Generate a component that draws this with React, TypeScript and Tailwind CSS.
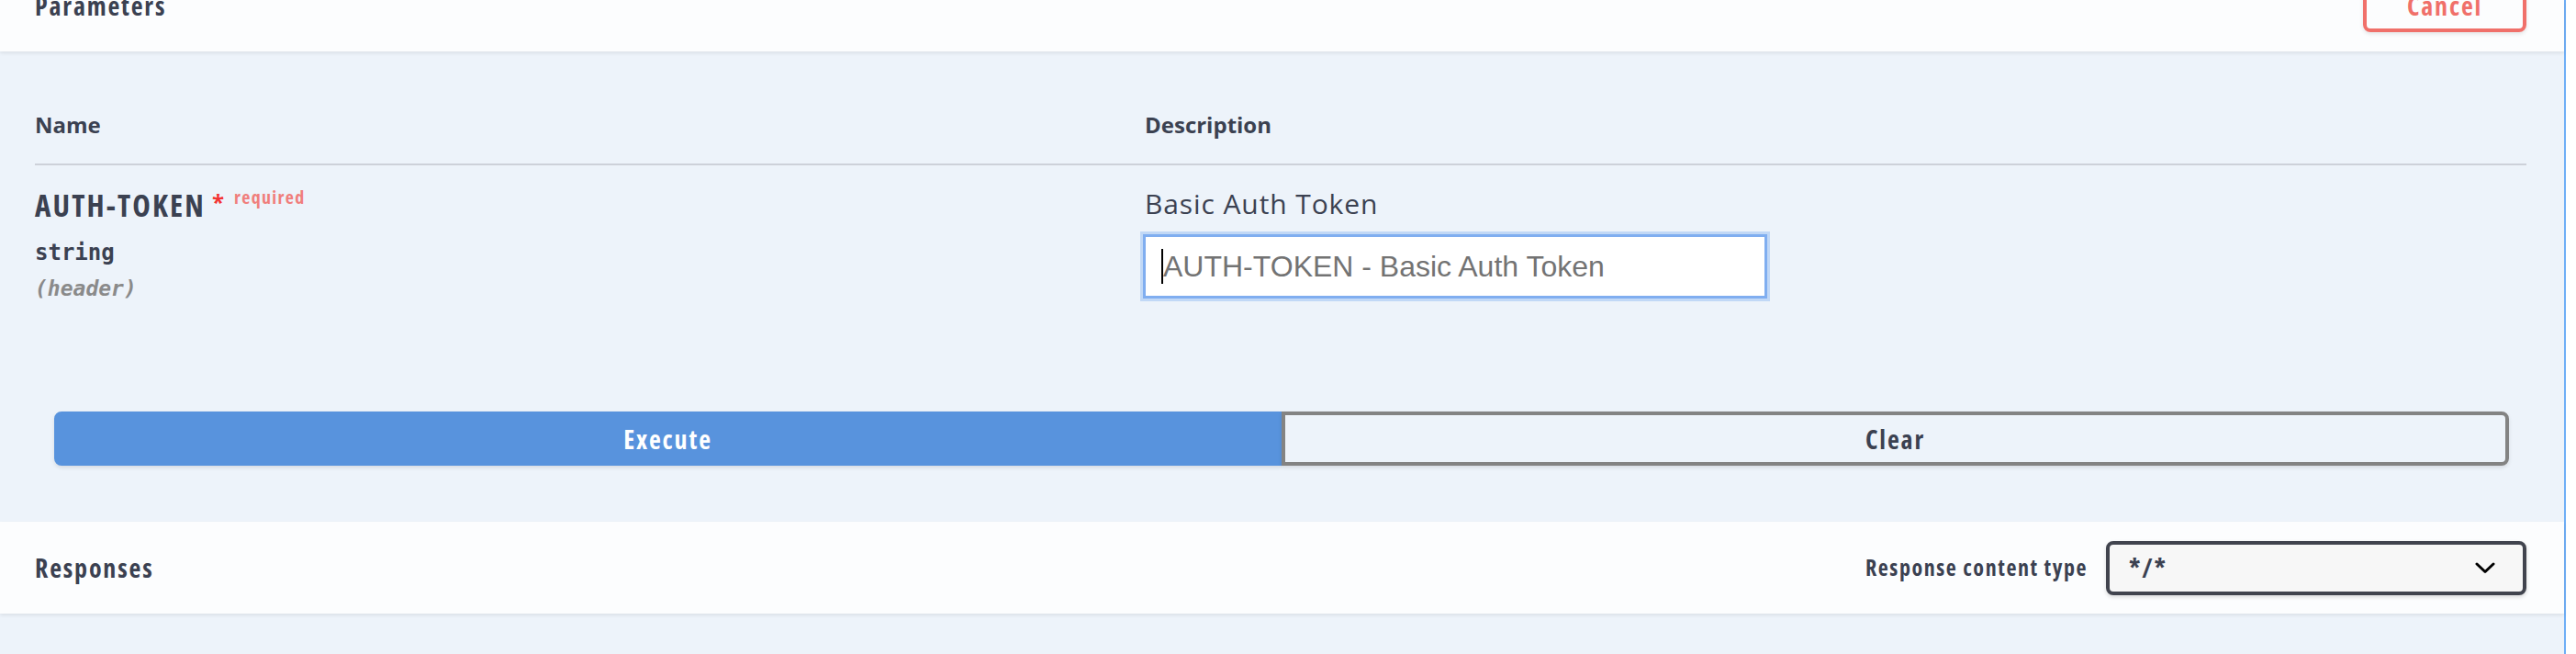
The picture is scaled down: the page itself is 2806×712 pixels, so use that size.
import React from "react";

const titl = "font-['Open_Sans',sans-serif] [font-stretch:75%] font-bold tracking-[0.065em]";
const open = "font-['Open_Sans',sans-serif]";

export default function App() {
  return (
    <div className="w-[2806px] h-[712px] bg-white flex overflow-hidden text-[#3b4151]">
      <div className="w-[2795px] h-full border-r-2 border-[#6eaef6] bg-[#edf3fa] flex flex-col">
        {/* Parameters header */}
        <div className="h-[56px] shrink-0 bg-[#fcfdfe] shadow-[0_2px_4px_rgba(0,0,0,0.08)] flex justify-between items-start pl-[38px] pr-[41px] relative z-10">
          <h4 className={`${titl} -mt-[8px] text-[28px] leading-[28px]`}>Parameters</h4>
          <button
            className={`${titl} -mt-[23px] h-[58px] w-[178px] border-4 border-[#f0706a] rounded-[8px] text-[#f0706a] text-[28px] leading-[28px] bg-transparent shadow-[0_2px_4px_rgba(0,0,0,0.1)]`}
          >
            Cancel
          </button>
        </div>

        {/* Parameters table */}
        <div className="pl-[38px] pr-[41px]">
          <div className="grid grid-cols-[1209px_1fr] pt-[68px] pb-[30px] border-b-2 border-[#cdd1d9]">
            <div className={`${open} font-bold text-[24px] leading-[24px]`}>Name</div>
            <div className={`${open} font-bold text-[24px] leading-[24px]`}>Description</div>
          </div>
          <div className="grid grid-cols-[1209px_1fr] pt-[28px]">
            <div className="flex flex-col">
              <div className="flex items-start h-[32px]">
                <span className={`${titl} text-[33px] leading-[32px] tracking-[0.07em]`}>AUTH-TOKEN</span>
                <span className={`${open} font-bold text-[24px] leading-[24px] text-[#f33333] ml-[7px]`}>*</span>
                <span className={`${titl} text-[20px] leading-[20px] text-[#f07e7c] ml-[11px] -mt-[3px]`}>required</span>
              </div>
              <div className="mt-[21px] font-['DejaVu_Sans_Mono',monospace] font-semibold text-[24px] leading-[28px]">string</div>
              <div className="mt-[11px] font-['DejaVu_Sans_Mono',monospace] font-semibold italic text-[23px] leading-[28px] text-[#8a8a8a]">(header)</div>
            </div>
            <div className="flex flex-col items-start">
              <div className={`${open} text-[30px] leading-[27px] tracking-[0.9px] text-[#3b4151]`}>Basic Auth Token</div>
              <div className="mt-[20px] w-[680px] h-[70px] -ml-[2px] bg-white border-[3px] border-[#80aef0] shadow-[0_0_0_3px_rgba(128,174,240,0.4)] flex items-center pl-[17px]">
                <span className="w-[2px] h-[38px] bg-black shrink-0" />
                <span className="font-['Liberation_Sans',Arial,sans-serif] text-[32px] leading-[36px] text-[#737373]">
                  AUTH-TOKEN - Basic Auth Token
                </span>
              </div>
            </div>
          </div>
        </div>

        {/* Execute / Clear */}
        <div className="flex pl-[59px] pr-[60px] mt-[120px]">
          <button
            className={`${titl} flex-1 h-[59px] bg-[#5893dd] border-4 border-[#5893dd] rounded-l-[8px] text-white text-[28px] leading-[28px] shadow-[0_2px_4px_rgba(0,0,0,0.1)]`}
          >
            Execute
          </button>
          <button
            className={`${titl} flex-1 h-[59px] bg-transparent border-4 border-[#838383] rounded-r-[8px] text-[#3b4151] text-[28px] leading-[28px] shadow-[0_2px_4px_rgba(0,0,0,0.1)]`}
          >
            Clear
          </button>
        </div>

        {/* Responses header */}
        <div className="mt-[61px] h-[100px] shrink-0 bg-[#fcfdfe] shadow-[0_2px_4px_rgba(0,0,0,0.08)] flex items-center justify-between pl-[38px] pr-[41px]">
          <h4 className={`${titl} text-[28px] leading-[28px]`}>Responses</h4>
          <div className="flex items-center gap-[20px]">
            <span className={`${titl} text-[24px] leading-[24px]`}>Response content type</span>
            <div className="w-[458px] h-[59px] bg-[#f7f7f7] border-4 border-[#41444e] rounded-[8px] shadow-[0_2px_4px_rgba(0,0,0,0.15)] flex items-center justify-between pl-[21px] pr-[30px]">
              <span className={`${titl} text-[28px] leading-[28px]`}>*/*</span>
              <svg width="22" height="13" viewBox="0 0 22 13" fill="none">
                <path d="M2 2 L11 10.5 L20 2" stroke="#000" strokeWidth="3" strokeLinecap="round" strokeLinejoin="round" />
              </svg>
            </div>
          </div>
        </div>
      </div>
    </div>
  );
}
